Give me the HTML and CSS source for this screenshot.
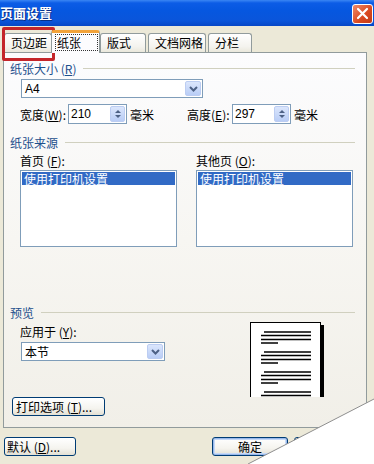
FILE: index.html
```html
<!DOCTYPE html>
<html lang="zh-CN">
<head>
    <meta charset="UTF-8">
    <title>页面设置</title>
    <link rel="stylesheet" href="styles.css">
</head>
<body>

    <!-- Barra de titulo -->
    <div class="titlebar">
        <span class="title">页面设置</span>
        <span class="close">
            <svg width="13" height="13" viewBox="0 0 13 13"><path d="M2 2 L11 11 M11 2 L2 11" stroke="#fff" stroke-width="2.2" stroke-linecap="round"/></svg>
        </span>
    </div>

    <!-- Abas -->
    <div class="tabs">
        <div class="tab t1">页边距</div>
        <div class="tab t2 active"><span class="focus">纸张</span></div>
        <div class="tab t3">版式</div>
        <div class="tab t4">文档网格</div>
        <div class="tab t5">分栏</div>
    </div>

    <div class="panel">
        <div class="group-head"><span>纸张大小 (<u>R</u>)</span></div>
        <div class="combo paper">
            <span class="val">A4</span>
            <span class="drop"><svg width="9" height="6" viewBox="0 0 9 6"><path d="M1 1 L4.5 4.5 L8 1" stroke="#4d6185" stroke-width="2" fill="none"/></svg></span>
        </div>
        <div class="size-row">
            <span class="lbl w">宽度(<u>W</u>):</span>
            <div class="spin"><span class="val">210</span><span class="spin-btn"><i class="up"></i><i class="down"></i></span></div>
            <span class="unit">毫米</span>
            <span class="lbl h">高度(<u>E</u>):</span>
            <div class="spin"><span class="val">297</span><span class="spin-btn"><i class="up"></i><i class="down"></i></span></div>
            <span class="unit">毫米</span>
        </div>

        <div class="group-head second"><span>纸张来源</span></div>
        <div class="source-row">
            <div class="source">
                <div class="src-label">首页 (<u>F</u>):</div>
                <div class="listbox"><div class="item sel">使用打印机设置</div></div>
            </div>
            <div class="source">
                <div class="src-label">其他页 (<u>O</u>):</div>
                <div class="listbox"><div class="item sel">使用打印机设置</div></div>
            </div>
        </div>

        <div class="group-head third"><span>预览</span></div>
        <div class="preview-row">
            <div class="apply">
                <div class="src-label">应用于 (<u>Y</u>):</div>
                <div class="combo section">
                    <span class="val cjk">本节</span>
                    <span class="drop"><svg width="9" height="6" viewBox="0 0 9 6"><path d="M1 1 L4.5 4.5 L8 1" stroke="#4d6185" stroke-width="2" fill="none"/></svg></span>
                </div>
            </div>
            <svg class="page" width="74" height="75" viewBox="0 0 74 75">
                <rect x="0.5" y="0.5" width="70" height="80" fill="#fff" stroke="#000"/>
                <rect x="70" y="3" width="4" height="75" fill="#000"/>
                <g stroke="#000" stroke-width="1.4">
                    <path d="M14 10 H61 M11 13.5 H61 M11 17.5 H61 M11 21 H28"/>
                    <path d="M14 30 H61 M11 33.5 H61 M11 37.5 H61 M11 41 H28"/>
                    <path d="M14 50 H61 M11 53.5 H61 M11 57.5 H61 M11 61 H28"/>
                    <path d="M14 70 H61 M11 73.5 H61"/>
                </g>
            </svg>
        </div>
        <button class="btn print">打印选项 (<u>T</u>)...</button>
    </div>

    <div class="bottom-row">
        <button class="btn default">默认 (<u>D</u>)...</button>
        <button class="btn ok">确定</button>
        <button class="btn cancel">取消</button>
    </div>

    <!-- Destaque vermelho e canto dobrado -->
    <div class="highlight"></div>
    <svg class="curl" width="374" height="464" viewBox="0 0 374 464">
        <polygon points="374,399 248,464 374,464" fill="#fff"/>
        <line x1="374" y1="399" x2="248" y2="464" stroke="#8e8e8e" stroke-width="1"/>
    </svg>

</body>
</html>
```

FILE: styles.css
```css
* {
    box-sizing: border-box;
}

html, body {
    margin: 0;
    padding: 0;
}

body {
    width: 374px;
    height: 464px;
    overflow: hidden;
    position: relative;
    background: #ece9d8;
    font-family: "Noto Sans CJK SC", "Liberation Sans", sans-serif;
    font-size: 12px;
    color: #000;
    white-space: nowrap;
}

u {
    text-decoration: underline;
}

.titlebar {
    height: 26px;
    display: flex;
    align-items: center;
    justify-content: space-between;
    padding: 0 1px 0 0;
    background: linear-gradient(#3a86f4 0, #0c5ce6 3px, #0657e0 40%, #0a55da 80%, #0747c6 100%);
}

.title {
    color: #fff;
    font-weight: bold;
    font-size: 13px;
    line-height: 26px;
    text-shadow: 1px 1px 0 #0a2f86;
}

.close {
    width: 21px;
    height: 20px;
    margin-top: 1px;
    border: 1px solid #fff;
    border-radius: 3px;
    background: linear-gradient(135deg, #f08a6a, #d9481f 60%, #c13a18);
    display: flex;
    align-items: center;
    justify-content: center;
}

/* Abas */
.tabs {
    height: 26px;
    display: flex;
    align-items: flex-end;
    padding-left: 4px;
}

.tab {
    height: 19px;
    border: 1px solid #919b9c;
    border-bottom: none;
    border-radius: 3px 3px 0 0;
    background: linear-gradient(#ffffff, #f4f3ee 70%, #eae8dc);
    line-height: 17px;
    padding: 0 0 0 6px;
}

.t1 { width: 48px; }
.t3 { width: 46px; margin-left: 1px; }
.t4 { width: 58px; margin-left: 2px; }
.t5 { width: 44px; margin-left: 2px; }

.tab.active {
    width: 49px;
    height: 23px;
    margin-bottom: -1px;
    margin-left: -1px;
    margin-right: -1px;
    border-top: 3px solid #f2a33a;
    background: #fcfcfe;
    padding: 1px 0 0 3px;
    z-index: 1;
}

.focus {
    display: inline-block;
    border: 1px dotted #333;
    line-height: 15px;
    padding: 0 16px 0 1px;
}

/* Painel */
.panel {
    margin-left: 3px;
    width: 364px;
    height: 376px;
    border: 1px solid #919b9c;
    background: linear-gradient(#fcfcfe, #f7f6f2 50%, #f1efe8);
    padding: 0 11px 0 6px;
}

.group-head {
    display: flex;
    align-items: center;
    gap: 7px;
    margin-top: 9px;
    line-height: 13px;
    color: #1d4f8c;
}

.group-head::after {
    content: "";
    flex: 1;
    height: 1px;
    background: #d0d0bf;
}

.group-head.second {
    margin-top: 12px;
}

.group-head.third {
    margin-top: 59px;
}

.combo {
    height: 19px;
    border: 1px solid #7f9db9;
    background: #fff;
    display: flex;
    align-items: center;
    padding-left: 3px;
}

.combo.paper {
    width: 182px;
    margin: 4px 0 0 11px;
}

.combo.section {
    width: 144px;
    margin: 4px 0 0 1px;
}

.val {
    font-family: "Liberation Sans", sans-serif;
    font-size: 12px;
}

.val.cjk {
    font-family: "Noto Sans CJK SC", sans-serif;
}

.drop {
    margin-left: auto;
    margin-right: 1px;
    width: 16px;
    height: 15px;
    border: 1px solid #bccdf2;
    border-radius: 2px;
    background: linear-gradient(#dbe6fc, #b9cdf6);
    display: flex;
    align-items: center;
    justify-content: center;
}

.size-row {
    display: flex;
    align-items: center;
    height: 20px;
    margin-top: 6px;
    padding-left: 10px;
}

.lbl {
    flex-shrink: 0;
}

.lbl.w { width: 48px; }
.lbl.h { width: 45px; margin-left: 33px; }

.spin {
    flex-shrink: 0;
    width: 59px;
    height: 20px;
    border: 1px solid #7f9db9;
    background: #fff;
    display: flex;
    align-items: center;
    padding-left: 2px;
}

.spin-btn {
    margin-left: auto;
    margin-right: 1px;
    width: 15px;
    height: 16px;
    border: 1px solid #bccdf2;
    border-radius: 2px;
    background: linear-gradient(#dbe6fc, #b9cdf6);
    display: flex;
    flex-direction: column;
    align-items: center;
    justify-content: center;
    gap: 2px;
}

.spin-btn i {
    width: 0;
    height: 0;
    border-left: 3px solid transparent;
    border-right: 3px solid transparent;
}

.spin-btn .up { border-bottom: 3px solid #4d6185; }
.spin-btn .down { border-top: 3px solid #4d6185; }

.unit {
    margin-left: 3px;
    flex-shrink: 0;
}

.source-row {
    display: flex;
    padding-left: 10px;
    gap: 19px;
}

.source {
    width: 157px;
}

.src-label {
    margin-top: 5px;
    line-height: 13px;
}

.listbox {
    margin-top: 3px;
    height: 77px;
    border: 1px solid #7f9db9;
    background: #fff;
    padding: 1px;
}

.item.sel {
    background: #316ac5;
    color: #fff;
    line-height: 13px;
    padding-left: 2px;
}

.preview-row {
    display: flex;
    justify-content: space-between;
    align-items: flex-start;
    height: 78px;
}

.apply {
    padding-left: 10px;
}

.apply .src-label {
    margin-top: 6px;
}

.page {
    margin-top: 3px;
    margin-right: 31px;
    display: block;
}

.btn {
    font-family: "Noto Sans CJK SC", sans-serif;
    font-size: 12px;
    height: 19px;
    border: 1px solid #003c74;
    border-radius: 3px;
    background: linear-gradient(#ffffff, #f5f4ef 60%, #e3e0d4);
    padding: 0;
    line-height: 15px;
    color: #000;
}

.btn.print {
    width: 93px;
    margin-left: 2px;
    text-align: left;
    padding-left: 3px;
}

.bottom-row {
    display: flex;
    margin-top: 9px;
    padding-left: 4px;
}

.btn.default {
    width: 72px;
    text-align: left;
    padding-left: 2px;
}

.btn.ok {
    width: 76px;
    margin-left: 136px;
    box-shadow: inset 0 0 0 1px #98b8ea, inset 0 0 0 2px #c6d9f7;
}

.btn.cancel {
    width: 72px;
    margin-left: 6px;
}

/* Destaque */
.highlight {
    position: absolute;
    left: 2px;
    top: 27px;
    width: 53px;
    height: 34px;
    border: 3px solid #c4262b;
    border-radius: 2px;
}

.curl {
    position: absolute;
    left: 0;
    top: 0;
    pointer-events: none;
}
```
